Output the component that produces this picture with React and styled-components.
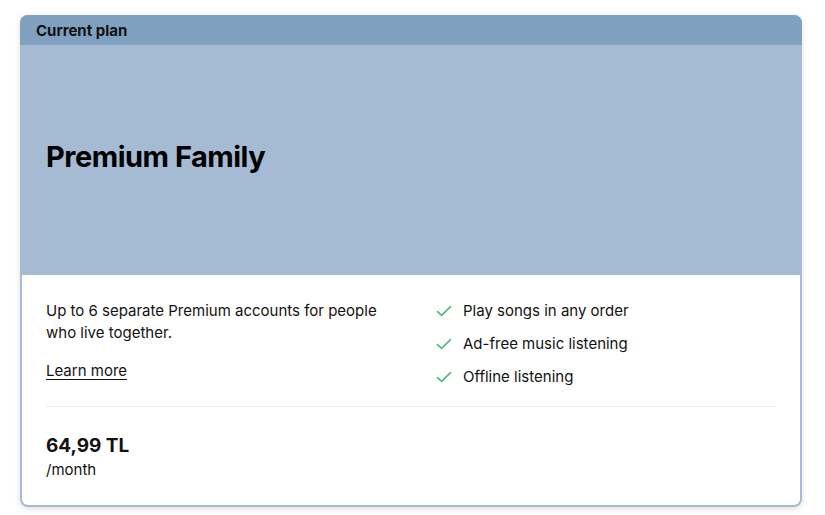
import React from 'react'
import styled, { createGlobalStyle } from 'styled-components'

const GlobalStyle = createGlobalStyle`
  body {
    margin: 0;
    background: #ffffff;
    font-family: Inter, "Noto Sans", sans-serif;
    color: #121212;
  }
`;

const features = [
  'Play songs in any order',
  'Ad-free music listening',
  'Offline listening',
];

const Check = () => (
  <svg width="16" height="16" viewBox="0 0 16 16" fill="none">
    <path d="M1.5 8.6 L5.6 12.4 L14.5 3.6" stroke="#52b77f" strokeWidth="1.6" strokeLinecap="round" strokeLinejoin="round" />
  </svg>
);

const App = () => {
  return (
    <Page>
      <GlobalStyle />
      <Card>
        <Badge>Current plan</Badge>
        <Hero>
          <PlanName>Premium Family</PlanName>
        </Hero>
        <Body>
          <Columns>
            <div>
              <Description>Up to 6 separate Premium accounts for people who live together.</Description>
              <LearnMore href="#">Learn more</LearnMore>
            </div>
            <FeatureList>
              {features.map(f => (
                <Feature key={f}>
                  <Check />
                  <span>{f}</span>
                </Feature>
              ))}
            </FeatureList>
          </Columns>
          <Divider />
          <Price>64,99 TL</Price>
          <Period>/month</Period>
        </Body>
      </Card>
    </Page>
  )
}

export default App

const Page = styled.div`
  padding: 15px 23px 9px 20px;
`;

const Card = styled.div`
  display: flex;
  flex-direction: column;
  border-radius: 8px;
  overflow: hidden;
  background: #a5bbd3;
  padding: 0 2px 2px;
  box-shadow: 0 2px 6px rgba(0, 0, 0, 0.12);
`;

const Badge = styled.div`
  background: #7fa0be;
  margin: 0 -2px;
  height: 30px;
  padding: 0 16px;
  display: flex;
  align-items: center;
  font-size: 15px;
  font-weight: 700;
  color: #121212;
`;

const Hero = styled.div`
  height: 230px;
  box-sizing: border-box;
  display: flex;
  align-items: center;
  padding: 0 24px 8px;
`;

const PlanName = styled.h1`
  margin: 0;
  font-size: 29px;
  font-weight: 700;
  letter-spacing: -0.5px;
  color: #000000;
`;

const Body = styled.div`
  background: #ffffff;
  border-radius: 0 0 6px 6px;
  padding: 25px 24px 25px;
`;

const Columns = styled.div`
  display: grid;
  grid-template-columns: 390px 1fr;
`;

const Description = styled.p`
  margin: 0;
  font-size: 15px;
  line-height: 22px;
  color: #121212;
  max-width: 350px;
`;

const LearnMore = styled.a`
  display: inline-block;
  margin-top: 16px;
  font-size: 15px;
  line-height: 22px;
  color: #121212;
  text-decoration: underline;
  text-underline-offset: 3px;
`;

const FeatureList = styled.ul`
  list-style: none;
  margin: 0;
  padding: 0;
  display: flex;
  flex-direction: column;
  gap: 11px;
`;

const Feature = styled.li`
  display: flex;
  align-items: center;
  gap: 11px;
  font-size: 15px;
  line-height: 22px;
  color: #121212;
`;

const Divider = styled.hr`
  border: none;
  border-top: 1px solid #ececec;
  margin: 18px 0 26px;
`;

const Price = styled.div`
  font-size: 19px;
  font-weight: 700;
  line-height: 26px;
  color: #121212;
`;

const Period = styled.div`
  margin-top: 1px;
  font-size: 15px;
  line-height: 20px;
  color: #121212;
`;
